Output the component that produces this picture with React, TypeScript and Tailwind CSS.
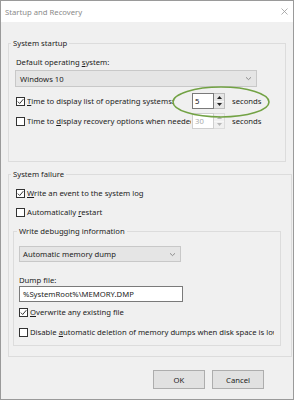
import React from "react";

const U = ({ children }: { children: React.ReactNode }) => <span className="underline underline-offset-1">{children}</span>;

function CheckBox({ checked }: { checked?: boolean }) {
  return (
    <span className="w-[9px] h-[9px] border border-[#333] bg-white flex items-center justify-center shrink-0">
      {checked && (
        <svg width="7" height="7" viewBox="0 0 7 7">
          <path d="M0.8 3.6 L2.7 5.5 L6.3 1.2" fill="none" stroke="#222" strokeWidth="0.9" />
        </svg>
      )}
    </span>
  );
}

function Chevron() {
  return (
    <svg width="7" height="5" viewBox="0 0 7 5">
      <path d="M1 1.3 L3.5 3.6 L6 1.3" fill="none" stroke="#777" strokeWidth="0.8" />
    </svg>
  );
}

function Spinner({ value, disabled }: { value: string; disabled?: boolean }) {
  const c = disabled ? "#b8b8b8" : "#222";
  return (
    <div className="flex h-[16px] shrink-0">
      <div className={`w-[22px] h-full border ${disabled ? "border-[#cfcfcf] text-[#aaa]" : "border-[#7a7a7a] text-[#111]"} bg-white flex items-center pl-[2px]`}>
        {value}
      </div>
      <div className={`w-[11px] h-full flex flex-col border-y border-r ${disabled ? "border-[#dcdcdc]" : "border-[#bdbdbd]"}`}>
        <div className={`flex-1 flex items-center justify-center ${disabled ? "bg-[#f0f0f0]" : "bg-[#e6e6e6]"} border-b border-[#f7f7f7]`}>
          <svg width="5" height="3" viewBox="0 0 5 3"><path d="M0 3 L2.5 0 L5 3Z" fill={c} /></svg>
        </div>
        <div className={`flex-1 flex items-center justify-center ${disabled ? "bg-[#f0f0f0]" : "bg-[#e6e6e6]"}`}>
          <svg width="5" height="3" viewBox="0 0 5 3"><path d="M0 0 L2.5 3 L5 0Z" fill={c} /></svg>
        </div>
      </div>
    </div>
  );
}

export default function App() {
  return (
    <div
      className="relative w-[294px] h-[400px] border border-[#9a9a9a] bg-[#f0f0f0] flex flex-col text-[7.7px] leading-[10px] text-[#1c1c1c] overflow-hidden"
      style={{ fontFamily: '"Noto Sans", "Liberation Sans", sans-serif' }}
    >
      {/* Title bar */}
      <div className="h-[21px] bg-white flex items-center justify-between pl-[4px] pr-[5px] shrink-0">
        <span className="text-[#8a8a8a]">Startup and Recovery</span>
        <svg width="7" height="7" viewBox="0 0 7 7">
          <path d="M0.5 0.5 L6.5 6.5 M6.5 0.5 L0.5 6.5" stroke="#9a9a9a" strokeWidth="0.8" />
        </svg>
      </div>

      <div className="flex flex-col pl-[7px] pr-[7px]">
        {/* System startup */}
        <fieldset className="mt-[16px] border border-[#dcdcdc] pl-[7px] pr-[6px] pb-[32px]">
          <legend className="px-[2px] -ml-[5px] leading-[10px]">System startup</legend>
          <div className="mt-[9px] h-[10px]">Default operating <U>s</U>ystem:</div>
          <div className="mt-[3px] -ml-[1px] w-[242px] h-[17px] border border-[#c8c8c8] bg-[#e5e5e5] flex items-center justify-between pl-[4px] pr-[4px]">
            <span>Windows 10</span>
            <Chevron />
          </div>
          <div className="mt-[6px] flex items-center h-[16px]">
            <CheckBox checked />
            <span className="ml-[2px] w-[164px] mr-[1px] overflow-hidden whitespace-nowrap"><U>T</U>ime to display list of operating systems:</span>
            <Spinner value="5" />
            <span className="ml-[7px] w-[37px] overflow-hidden whitespace-nowrap">seconds</span>
          </div>
          <div className="mt-[4px] flex items-center h-[16px]">
            <CheckBox />
            <span className="ml-[2px] w-[164px] mr-[1px] overflow-hidden whitespace-nowrap">Time to <U>d</U>isplay recovery options when needed:</span>
            <Spinner value="30" disabled />
            <span className="ml-[7px] w-[37px] overflow-hidden whitespace-nowrap">seconds</span>
          </div>
        </fieldset>

        {/* System failure */}
        <fieldset className="mt-[7px] border border-[#dcdcdc] pl-[7px] pr-[10px] pb-[10px]">
          <legend className="px-[2px] -ml-[5px] leading-[10px]">System failure</legend>
          <div className="mt-[9px] flex items-center h-[10px]">
            <CheckBox checked />
            <span className="ml-[2px]"><U>W</U>rite an event to the system log</span>
          </div>
          <div className="mt-[9px] flex items-center h-[10px]">
            <CheckBox />
            <span className="ml-[2px]">Automatically <U>r</U>estart</span>
          </div>

          <fieldset className="mt-[9px] -ml-[3px] border border-[#dcdcdc] pl-[5px] pr-[6px] pb-[8px]">
            <legend className="px-[2px] -ml-[2px] leading-[10px]">Write debugging information</legend>
            <div className="mt-[10px] w-[162px] h-[16px] border border-[#c8c8c8] bg-[#e5e5e5] flex items-center justify-between pl-[3px] pr-[4px]">
              <span>Automatic memory dump</span>
              <Chevron />
            </div>
            <div className="mt-[13px] h-[10px]">Dump file:</div>
            <div className="mt-[1px] w-[164px] h-[16px] border border-[#7a7a7a] bg-white flex items-center pl-[3px]">
              %SystemRoot%\MEMORY.DMP
            </div>
            <div className="mt-[5px] flex items-center h-[10px]">
              <CheckBox checked />
              <span className="ml-[2px]"><U>O</U>verwrite any existing file</span>
            </div>
            <div className="mt-[10px] flex items-center h-[10px]">
              <CheckBox />
              <span className="ml-[2px] whitespace-nowrap overflow-hidden w-[244px]">Disable <U>a</U>utomatic deletion of memory dumps when disk space is low</span>
            </div>
          </fieldset>
        </fieldset>

        {/* Buttons */}
        <div className="mt-[13px] flex justify-end gap-[7px] pr-[22px]">
          <div className="w-[52px] h-[19px] border border-[#adadad] bg-[#e1e1e1] flex items-center justify-center">OK</div>
          <div className="w-[52px] h-[19px] border border-[#adadad] bg-[#e1e1e1] flex items-center justify-center">Cancel</div>
        </div>
      </div>

      {/* Green highlight ellipse */}
      <svg className="absolute left-0 top-0 pointer-events-none" width="294" height="400">
        <ellipse cx="220" cy="101" rx="48" ry="15" fill="none" stroke="#72a244" strokeWidth="1.6" />
      </svg>
    </div>
  );
}
